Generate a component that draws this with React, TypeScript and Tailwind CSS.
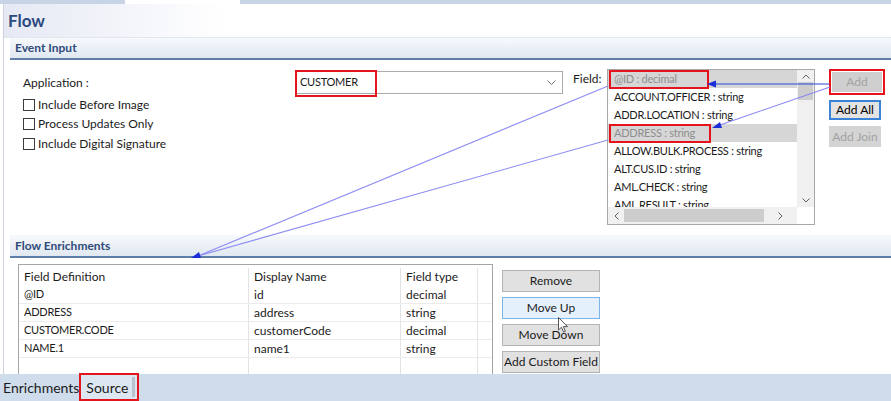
import React from "react";

type Field = { label: string; selected?: boolean; marked?: boolean; box?: number };

const FIELDS: Field[] = [
  { label: "@ID : decimal", selected: true, marked: true, box: 100 },
  { label: "ACCOUNT.OFFICER : string" },
  { label: "ADDR.LOCATION : string" },
  { label: "ADDRESS : string", selected: true, marked: true, box: 102 },
  { label: "ALLOW.BULK.PROCESS : string" },
  { label: "ALT.CUS.ID : string" },
  { label: "AML.CHECK : string" },
  { label: "AML.RESULT : string" },
];

const ROWS = [
  ["@ID", "id", "decimal"],
  ["ADDRESS", "address", "string"],
  ["CUSTOMER.CODE", "customerCode", "decimal"],
  ["NAME.1", "name1", "string"],
  ["", "", ""],
];

const FONT = "font-['Segoe_UI','Lato','Noto_Sans',sans-serif]";
// Segoe's capitals are narrower than Lato's
const CAPS = "text-[11px] tracking-[-0.25px]";

export default function App() {
  return (
    <div className={`relative h-[401px] w-[891px] overflow-hidden bg-white text-[12px] text-[#1b1b1b] ${FONT}`}>
      {/* editor tab strip */}
      <div className="flex h-[4px]">
        <div className="w-[125px] bg-[#c6d4e5]" />
        <div className="w-[115px] bg-white" />
        <div className="flex-1 bg-[#c6d4e5]" />
      </div>

      <div className="ml-[3px] h-[370px] border-l border-[#cdd3db]">
        {/* Title */}
        <div className="flex h-[34px] items-center border-b border-[#dfe7f0] bg-gradient-to-r from-[#e6e9f4] via-white via-[25%] to-white pl-[4px]">
          <span className="text-[17px] font-bold text-[#2b4a7e]">Flow</span>
        </div>

        {/* Event Input */}
        <SectionHeader title="Event Input" h="h-[22px]" />
        <div className="ml-[6px] flex h-[175px] pl-[13px] pt-[9px]">
          <div className="w-[272px] pt-[5px]">
            <div className="flex h-[18px] items-center">Application :</div>
            <div className="mt-[3px]">
              <Check label="Include Before Image" />
              <Check label="Process Updates Only" />
              <Check label="Include Digital Signature" />
            </div>
          </div>

          <div className="relative mt-[2px] flex h-[23px] w-[268px] items-center justify-between border border-[#ababab] pl-[4px] pr-[6px]">
            <span className={CAPS}>CUSTOMER</span>
            <svg width="9" height="6" viewBox="0 0 9 6">
              <polyline points="0.5,0.5 4.5,4.5 8.5,0.5" fill="none" stroke="#707070" strokeWidth="1" />
            </svg>
            <div className="absolute -left-[1px] -top-[2px] h-[27px] w-[82px] border-2 border-[#e3141b]" />
          </div>

          <div className="ml-[10px] w-[34px] pt-[1px]">Field:</div>

          <FieldList />

          <div className="ml-[14px] flex w-[56px] flex-col">
            <div className="h-[26px] border-2 border-[#e3141b] p-[1px]">
              <div className="flex h-full items-center justify-center bg-[#cfcfcf] text-[#a2a2a2]">Add</div>
            </div>
            <div className="mt-[5px] flex h-[20px] w-[52px] items-center justify-center border-2 border-[#3a83d6] bg-[#e3e3e3] text-black">
              Add All
            </div>
            <div className="mt-[6px] flex h-[21px] w-[52px] items-center justify-center bg-[#d4d4d4] text-[#a2a2a2]">
              Add Join
            </div>
          </div>
        </div>

        {/* Flow Enrichments */}
        <SectionHeader title="Flow Enrichments" h="h-[23px]" />
        <div className="ml-[6px] flex h-[116px] overflow-hidden pl-[8px] pt-[6px]">
          <div className="h-[114px] w-[475px] border border-[#a5a5a5] pt-[3px]">
            {[["Field Definition", "Display Name", "Field type"], ...ROWS].map((r, i) => (
              <div key={i} className={`flex h-[18px] ${i > 0 ? "border-b border-[#ececec]" : ""}`}>
                <div className="flex w-[230px] items-center border-r border-[#e3e3e3] pl-[5px]">
                  <span className={i > 0 ? CAPS : ""}>{r[0]}</span>
                </div>
                <div className="flex w-[152px] items-center border-r border-[#e3e3e3] pl-[5px]">{r[1]}</div>
                <div className="flex w-[77px] items-center border-r border-[#e3e3e3] pl-[5px]">{r[2]}</div>
                <div className="flex-1" />
              </div>
            ))}
          </div>

          <div className="ml-[9px] flex w-[98px] flex-col gap-[5px] pt-[6px]">
            <Btn label="Remove" />
            <Btn label="Move Up" active />
            <Btn label="Move Down" />
            <Btn label="Add Custom Field" />
          </div>
        </div>
      </div>

      {/* bottom tabs */}
      <div className="flex h-[27px] items-stretch bg-[#cfdcec] text-[14px]">
        <div className="flex items-center pl-[3px]">Enrichments</div>
        <div className="-mt-[1px] flex w-[60px] items-center border-2 border-[#e3141b] bg-[#dde7f2] pl-[5px]">
          <span>Source</span>
          <span className="ml-[4px] h-[20px] w-[3px] bg-[#b8c3cf]" />
        </div>
      </div>

      {/* annotation arrows */}
      <svg className="pointer-events-none absolute left-0 top-0" width="891" height="401">
        <line x1="829" y1="84" x2="712" y2="84" stroke="#2d48d8" strokeWidth="1.2" />
        <polygon points="707,84 716,80.5 716,87.5" fill="#1c2fd6" />
        <line x1="830" y1="87" x2="717" y2="126" stroke="#8585f2" strokeWidth="1.1" />
        <polygon points="712,128 720,122 722,128" fill="#1c2fd6" />
        <line x1="608" y1="86" x2="198" y2="256" stroke="#8d8df3" strokeWidth="1.1" />
        <line x1="608" y1="140" x2="198" y2="256" stroke="#8d8df3" strokeWidth="1.1" />
        <polygon points="191,258 199,252 201,258" fill="#1c2fd6" />
      </svg>

      {/* mouse pointer */}
      <svg className="pointer-events-none absolute left-[558px] top-[317px]" width="11" height="17" viewBox="0 0 11 17">
        <path d="M0.5 0.5 L0.5 13 L3.5 10.2 L5.6 15.2 L7.4 14.4 L5.4 9.6 L9.5 9.6 Z" fill="white" stroke="#555" strokeWidth="1" />
      </svg>
    </div>
  );
}

function SectionHeader({ title, h }: { title: string; h: string }) {
  return (
    <div className={`ml-[6px] flex ${h} items-center border-b-2 border-[#5f7ea8] bg-gradient-to-b from-[#f7f9fc] to-[#e1e8f1] pl-[5px] text-[12px] font-bold text-[#2f4b7a]`}>
      {title}
    </div>
  );
}

function Check({ label }: { label: string }) {
  return (
    <div className="flex h-[19.5px] items-center">
      <span className="h-[12px] w-[12px] border border-[#3c3c3c] bg-white" />
      <span className="ml-[3px]">{label}</span>
    </div>
  );
}

function Btn({ label, active }: { label: string; active?: boolean }) {
  return (
    <div
      className={`flex h-[22px] items-center justify-center border ${
        active ? "border-[#7db4ea] bg-[#e4f0fb]" : "border-[#b4b4b4] bg-[#e1e1e1]"
      }`}
    >
      {label}
    </div>
  );
}

function FieldList() {
  return (
    <div className="flex h-[156px] w-[208px] flex-col border border-[#a8a8a8] bg-white">
      <div className="flex h-[137px] overflow-hidden">
        <div className="flex-1 overflow-hidden">
          {FIELDS.map((f) => (
            <div
              key={f.label}
              className={`relative flex h-[18px] items-center whitespace-nowrap pl-[6px] ${
                f.selected ? "bg-[#d6d6d6] text-[#8e8e8e]" : ""
              }`}
            >
              <span className={CAPS}>{f.label}</span>
              {f.marked && (
                <div className="absolute left-[1px] top-0 h-[19px] border-2 border-[#e3141b]" style={{ width: f.box }} />
              )}
            </div>
          ))}
        </div>
        <div className="flex w-[17px] flex-col items-center bg-[#f0f0f0]">
          <div className="flex h-[12px] items-center">
            <svg width="8" height="5" viewBox="0 0 8 5">
              <polyline points="0.5,4.5 4,1 7.5,4.5" fill="none" stroke="#606060" />
            </svg>
          </div>
          <div className="h-[18px] w-[15px] bg-[#cdcdcd]" />
          <div className="flex-1" />
          <div className="flex h-[14px] items-center">
            <svg width="8" height="5" viewBox="0 0 8 5">
              <polyline points="0.5,0.5 4,4 7.5,0.5" fill="none" stroke="#606060" />
            </svg>
          </div>
        </div>
      </div>
      <div className="flex h-[17px]">
        <div className="flex flex-1 items-center bg-[#f0f0f0]">
          <div className="flex w-[16px] justify-center">
            <svg width="5" height="8" viewBox="0 0 5 8">
              <polyline points="4.5,0.5 1,4 4.5,7.5" fill="none" stroke="#606060" />
            </svg>
          </div>
          <div className="h-[13px] w-[140px] bg-[#cdcdcd]" />
          <div className="flex flex-1 justify-center">
            <svg width="5" height="8" viewBox="0 0 5 8">
              <polyline points="0.5,0.5 4,4 0.5,7.5" fill="none" stroke="#606060" />
            </svg>
          </div>
        </div>
        <div className="w-[17px] bg-white" />
      </div>
    </div>
  );
}
